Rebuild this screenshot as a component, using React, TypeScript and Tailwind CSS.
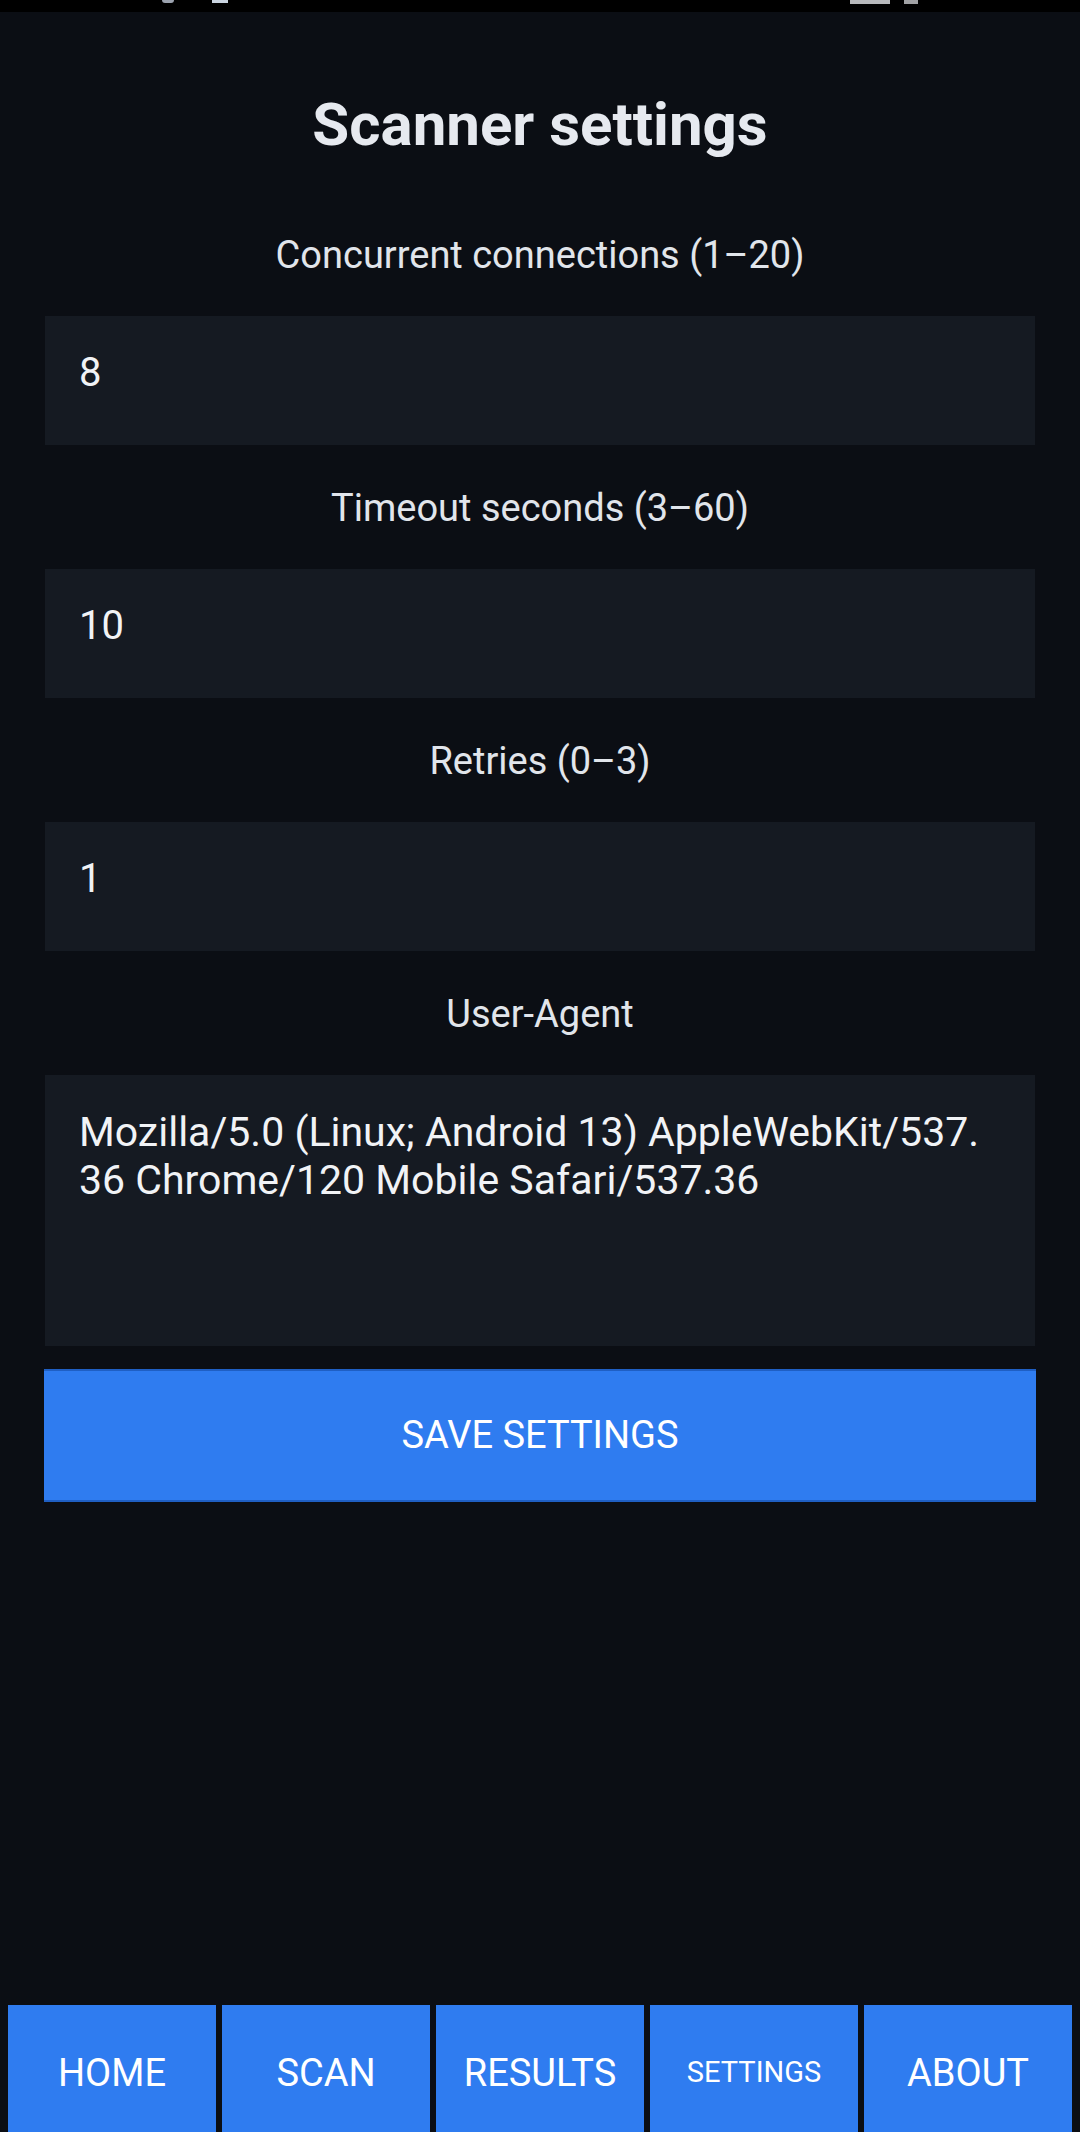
import React from 'react';

const fields = [
    { label: 'Concurrent connections (1–20)', value: '8' },
    { label: 'Timeout seconds (3–60)', value: '10' },
    { label: 'Retries (0–3)', value: '1' },
];

const tabs = ['HOME', 'SCAN', 'RESULTS', 'SETTINGS', 'ABOUT'];

export default function App() {
    return (
        <div className="h-[2132px] overflow-hidden flex flex-col bg-[#0b0e14] font-['Roboto',sans-serif]">
            {/* status bar, cut off at the top */}
            <div className="h-[12px] bg-black flex items-start">
                <div className="ml-[162px] w-[12px] h-[3px] rounded-b-full bg-[#9ca3af]" />
                <div className="ml-[38px] w-[16px] h-[3px] bg-[#cbd5e1]" />
                <div className="ml-[622px] w-[40px] h-[4px] bg-[#e5e7eb] opacity-80" />
                <div className="ml-[14px] w-[14px] h-[4px] bg-[#e5e7eb] opacity-70" />
            </div>

            <div className="flex flex-col px-[45px]">
                <h1 className="pt-[77px] text-center text-[60px] leading-[72px] font-bold text-[#e6e9ef]">
                    Scanner settings
                </h1>

                {fields.map((f, i) => (
                    <div key={f.label} className={i === 0 ? 'mt-[72px]' : 'mt-[41px]'}>
                        <p className="text-center text-[38px] leading-[44px] text-[#e1e5eb]">
                            {f.label}
                        </p>
                        <div className="mt-[39px] h-[129px] bg-[#151a22] px-[34px] pt-[33px] text-[40px] leading-[48px] text-[#f1f3f6]">
                            {f.value}
                        </div>
                    </div>
                ))}

                <div className="mt-[41px]">
                    <p className="text-center text-[38px] leading-[44px] text-[#e1e5eb]">
                        User-Agent
                    </p>
                    <div className="mt-[39px] h-[271px] bg-[#151a22] px-[34px] pt-[33px] text-[41px] leading-[48px] text-[#f1f3f6]">
                        Mozilla/5.0 (Linux; Android 13) AppleWebKit/537.
                        <br />
                        36 Chrome/120 Mobile Safari/537.36
                    </div>
                </div>

                <button className="mt-[23px] h-[133px] -mx-px bg-[#2f7cf0] border-y-2 border-[#1f5fc4] text-[38px] text-white">
                    SAVE SETTINGS
                </button>
            </div>

            <nav className="mt-auto flex gap-[6px] px-[8px]">
                {tabs.map((t) => (
                    <button
                        key={t}
                        className={`flex-1 h-[127px] pt-[9px] bg-[#2f7cf0] text-white ${
                            t === 'SETTINGS' ? 'text-[29px]' : 'text-[38px]'
                        }`}
                    >
                        {t}
                    </button>
                ))}
            </nav>
        </div>
    );
}
